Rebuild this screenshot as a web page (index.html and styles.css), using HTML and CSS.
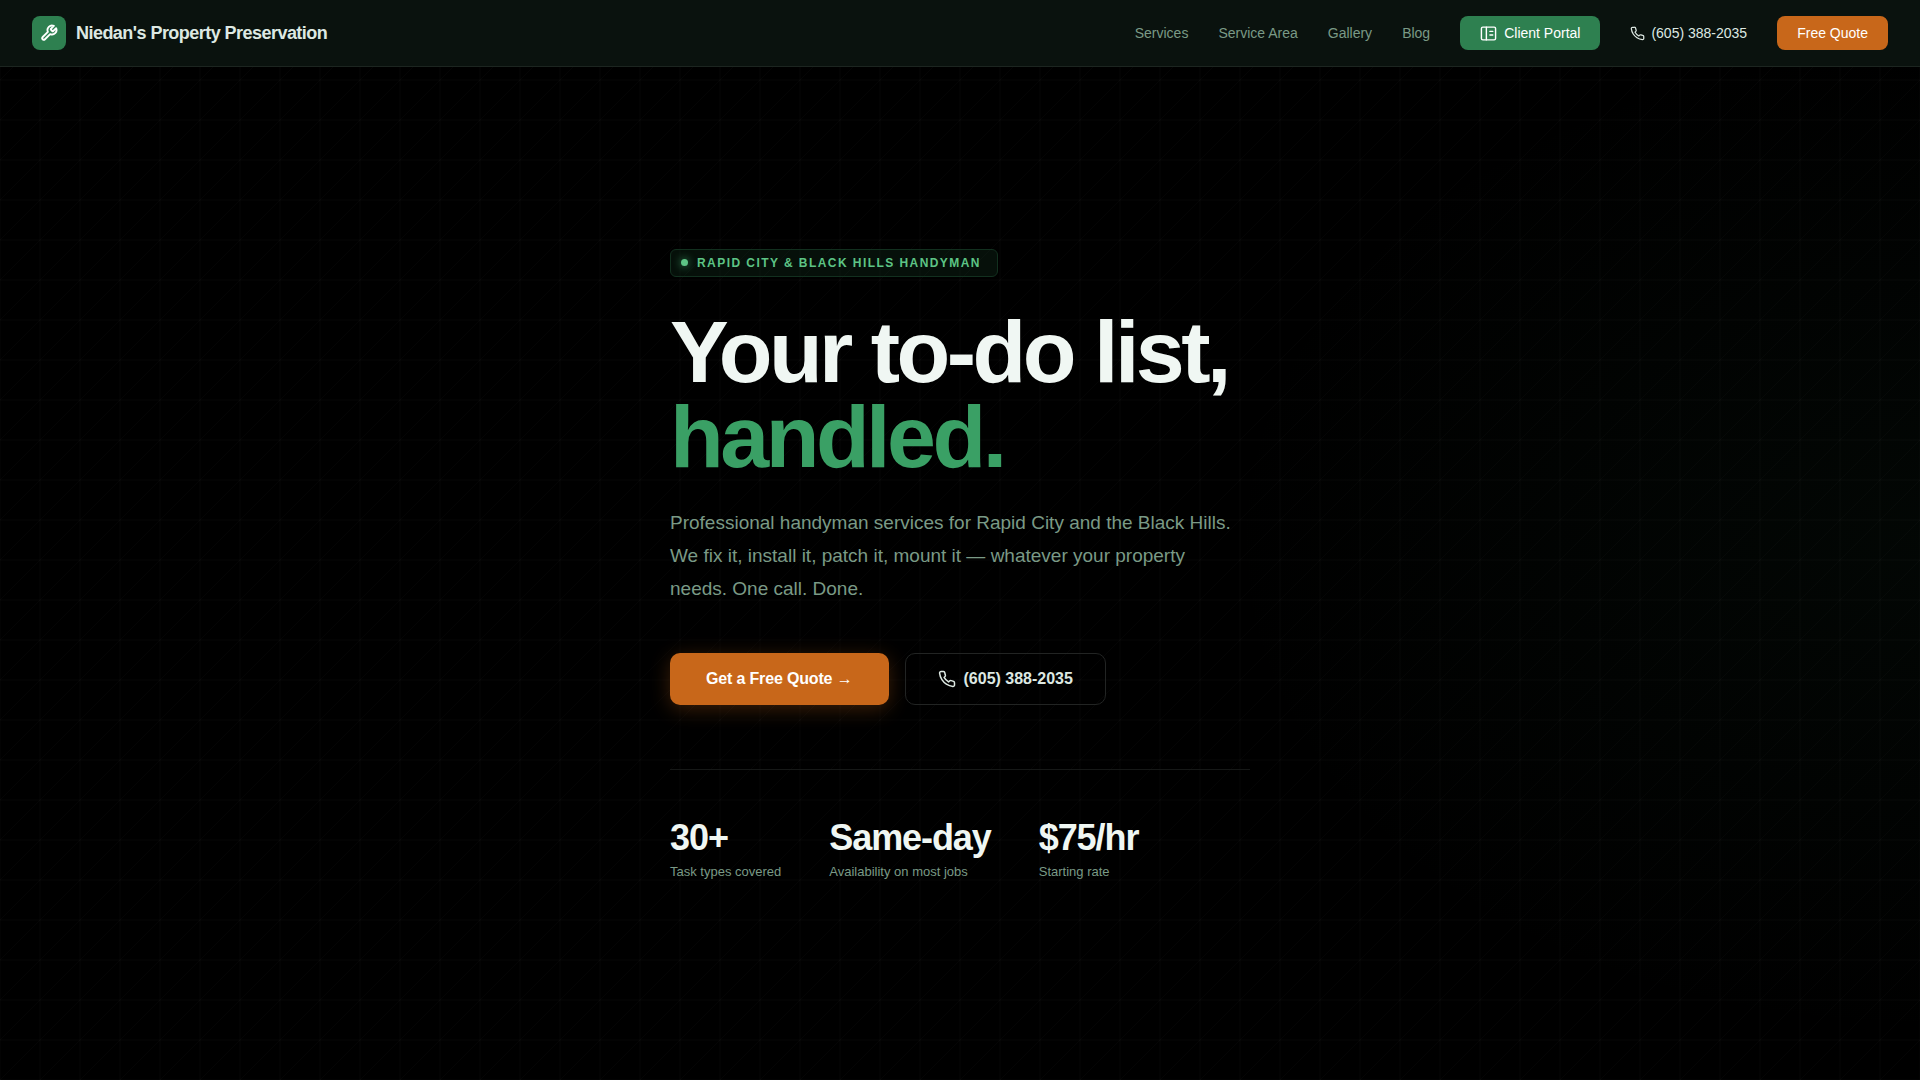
FILE: index.html
```html
<!DOCTYPE html>
<html lang="en">
<head>
    <meta charset="UTF-8">
    <meta name="viewport" content="width=device-width, initial-scale=1.0">
    <title>Niedan's Property Preservation</title>
    <link rel="stylesheet" href="styles.css">
</head>
<body>

<!-- Header -->
<header class="header">
    <a href="#" class="brand">
        <span class="brand-icon">
            <svg width="18" height="18" viewBox="0 0 24 24" fill="none" stroke="currentColor" stroke-width="2.5" stroke-linecap="round" stroke-linejoin="round"><path d="M14.7 6.3a1 1 0 0 0 0 1.4l1.6 1.6a1 1 0 0 0 1.4 0l3.77-3.77a6 6 0 0 1-7.94 7.94l-6.91 6.91a2.12 2.12 0 0 1-3-3l6.91-6.91a6 6 0 0 1 7.94-7.94l-3.76 3.76z"/></svg>
        </span>
        <span class="brand-name">Niedan's Property Preservation</span>
    </a>
    <nav class="nav">
        <a href="#services">Services</a>
        <a href="#area">Service Area</a>
        <a href="#gallery">Gallery</a>
        <a href="#blog">Blog</a>
        <a href="#portal" class="nav-btn nav-portal">
            <svg width="17" height="17" viewBox="0 0 24 24" fill="none" stroke="currentColor" stroke-width="2" stroke-linecap="round" stroke-linejoin="round"><rect x="2" y="3" width="20" height="18" rx="2"/><path d="M9 3v18M14 9h4M14 14h4"/></svg>
            Client Portal
        </a>
        <a href="tel:6053882035" class="nav-phone">
            <svg width="15" height="15" viewBox="0 0 24 24" fill="none" stroke="currentColor" stroke-width="2" stroke-linecap="round" stroke-linejoin="round"><path d="M22 16.92v3a2 2 0 0 1-2.18 2 19.79 19.79 0 0 1-8.63-3.07 19.5 19.5 0 0 1-6-6 19.79 19.79 0 0 1-3.07-8.67A2 2 0 0 1 4.11 2h3a2 2 0 0 1 2 1.72 12.84 12.84 0 0 0 .7 2.81 2 2 0 0 1-.45 2.11L8.09 9.91a16 16 0 0 0 6 6l1.27-1.27a2 2 0 0 1 2.11-.45 12.84 12.84 0 0 0 2.81.7A2 2 0 0 1 22 16.92z"/></svg>
            (605) 388-2035
        </a>
        <a href="#quote" class="nav-btn nav-quote">Free Quote</a>
    </nav>
</header>

<!-- Hero -->
<main class="hero">
    <div class="hero-content">
        <div class="badge"><span class="badge-dot"></span>Rapid City &amp; Black Hills Handyman</div>
        <h1>Your to-do list,<br><span class="accent">handled.</span></h1>
        <p class="lead">Professional handyman services for Rapid City and the Black Hills. We fix it, install it, patch it, mount it — whatever your property needs. One call. Done.</p>
        <div class="actions">
            <a href="#quote" class="btn btn-primary">Get a Free Quote →</a>
            <a href="tel:6053882035" class="btn btn-outline">
                <svg width="18" height="18" viewBox="0 0 24 24" fill="none" stroke="currentColor" stroke-width="2" stroke-linecap="round" stroke-linejoin="round"><path d="M22 16.92v3a2 2 0 0 1-2.18 2 19.79 19.79 0 0 1-8.63-3.07 19.5 19.5 0 0 1-6-6 19.79 19.79 0 0 1-3.07-8.67A2 2 0 0 1 4.11 2h3a2 2 0 0 1 2 1.72 12.84 12.84 0 0 0 .7 2.81 2 2 0 0 1-.45 2.11L8.09 9.91a16 16 0 0 0 6 6l1.27-1.27a2 2 0 0 1 2.11-.45 12.84 12.84 0 0 0 2.81.7A2 2 0 0 1 22 16.92z"/></svg>
                (605) 388-2035
            </a>
        </div>
        <div class="stats">
            <div>
                <div class="stat-value">30+</div>
                <div class="stat-label">Task types covered</div>
            </div>
            <div>
                <div class="stat-value">Same-day</div>
                <div class="stat-label">Availability on most jobs</div>
            </div>
            <div>
                <div class="stat-value">$75/hr</div>
                <div class="stat-label">Starting rate</div>
            </div>
        </div>
    </div>
</main>

</body>
</html>
```

FILE: styles.css
```css
* {
    box-sizing: border-box;
    margin: 0;
    padding: 0;
}
body {
    display: flex;
    flex-direction: column;
    min-height: 100vh;
    font-family: "Liberation Sans", Arial, sans-serif;
    color: #f0f7f3;
    /* faint 40px grid with a diagonal through each cell, green glow on the right */
    background-color: #000;
    background-image:
        linear-gradient(90deg, rgba(255, 255, 255, 0.012) 1px, transparent 1px, transparent 39px, rgba(255, 255, 255, 0.012) 39px),
        linear-gradient(rgba(255, 255, 255, 0.012) 1px, transparent 1px, transparent 39px, rgba(255, 255, 255, 0.012) 39px),
        linear-gradient(135deg, transparent 49%, rgba(255, 255, 255, 0.02) 50%, transparent 51%),
        radial-gradient(ellipse 700px 500px at 100% 50%, rgba(46, 125, 79, 0.05), transparent);
    background-size: 40px 40px, 40px 40px, 40px 40px, 100% 100%;
}
a {
    color: inherit;
    text-decoration: none;
}
svg {
    flex-shrink: 0;
}

/* Header */
.header {
    display: flex;
    align-items: center;
    justify-content: space-between;
    padding: 16px 32px;
    background: #0a120e;
    border-bottom: 1px solid #1c2520;
}
.brand {
    display: flex;
    align-items: center;
    gap: 10px;
}
.brand-icon {
    display: flex;
    align-items: center;
    justify-content: center;
    width: 34px;
    height: 34px;
    border-radius: 8px;
    background: #2e8050;
    color: #fff;
}
.brand-name {
    font-size: 18px;
    font-weight: bold;
    letter-spacing: -0.03em;
    color: #dde8e2;
}
.nav {
    display: flex;
    align-items: center;
    gap: 30px;
    font-size: 14px;
    color: #7a9a86;
}
.nav-btn {
    display: flex;
    align-items: center;
    gap: 7px;
    height: 34px;
    padding: 0 20px;
    border-radius: 8px;
    color: #fff;
}
.nav-portal {
    background: #2e8050;
}
.nav-quote {
    background: #c8671a;
}
.nav-phone {
    display: flex;
    align-items: center;
    gap: 6px;
    color: #dde8e2;
}

/* Hero */
.hero {
    flex: 1;
    display: flex;
    align-items: center;
    justify-content: center;
    padding: 60px 32px 80px;
}
.hero-content {
    width: 100%;
    max-width: 580px;
}
.badge {
    display: inline-flex;
    align-items: center;
    gap: 9px;
    height: 28px;
    padding: 0 16px 0 10px;
    border: 1px solid #12301f;
    border-radius: 6px;
    background: rgba(46, 128, 80, 0.12);
    color: #5dc485;
    font-size: 12px;
    font-weight: bold;
    letter-spacing: 0.12em;
    text-transform: uppercase;
}
.badge-dot {
    width: 7px;
    height: 7px;
    border-radius: 50%;
    background: #5dc485;
    box-shadow: 0 0 8px #3aa065;
}
h1 {
    margin-top: 32px;
    font-size: 88px;
    line-height: 85px;
    letter-spacing: -0.04em;
}
.accent {
    color: #3aa065;
}
.lead {
    max-width: 570px;
    margin-top: 27px;
    font-size: 19px;
    line-height: 33px;
    color: #7a9a86;
}
.actions {
    display: flex;
    flex-wrap: wrap;
    gap: 16px;
    margin-top: 48px;
}
.btn {
    display: flex;
    align-items: center;
    gap: 8px;
    height: 52px;
    border-radius: 10px;
    font-size: 16px;
    font-weight: bold;
}
.btn-primary {
    padding: 0 36px;
    background: #c8671a;
    color: #fff;
    letter-spacing: -0.01em;
    box-shadow: 0 4px 20px rgba(200, 103, 26, 0.3);
}
.btn-outline {
    padding: 0 32px;
    border: 1px solid #222423;
    color: #dde8e2;
}
.stats {
    display: flex;
    flex-wrap: wrap;
    gap: 48px;
    margin-top: 64px;
    padding-top: 48px;
    border-top: 1px solid #161817;
}
.stat-value {
    font-size: 36px;
    font-weight: bold;
    line-height: 40px;
    letter-spacing: -0.03em;
}
.stat-label {
    margin-top: 6px;
    font-size: 13px;
    line-height: 15px;
    color: #7a9a86;
}
```
